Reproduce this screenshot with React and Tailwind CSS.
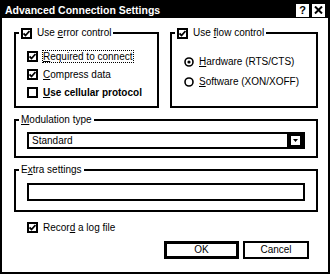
import React from "react";

const font = { fontFamily: '"Liberation Sans", Arial, sans-serif' };

function Check({ checked }) {
  return (
    <span className="flex h-[11px] w-[11px] shrink-0 items-center justify-center border-2 border-black bg-white">
      {checked && (
        <svg width="7" height="7" viewBox="0 0 7 7">
          <path d="M0.5 3.5 L2.5 5.5 L6.5 1" fill="none" stroke="black" strokeWidth="1.8" />
        </svg>
      )}
    </span>
  );
}

function Radio({ on }) {
  return (
    <svg width="10" height="10" viewBox="0 0 10 10" className="shrink-0">
      <circle cx="5" cy="5" r="4" fill="white" stroke="black" strokeWidth="1.6" />
      {on && <circle cx="5" cy="5" r="1.6" fill="black" />}
    </svg>
  );
}

function U({ children }) {
  return <span className="underline underline-offset-1">{children}</span>;
}

function Group({ legend, className, children }) {
  return (
    <fieldset className={`border-2 border-black ${className}`}>
      <legend className="ml-[3px] flex items-center gap-[5px] px-[2px] text-[10px] leading-[12px]">{legend}</legend>
      {children}
    </fieldset>
  );
}

export default function App() {
  return (
    <div className="h-[276px] w-[330px] bg-white text-black" style={font}>
      <div className="flex h-[274px] w-[330px] flex-col border-2 border-black">
        <div className="flex h-[16px] items-center justify-between bg-black pl-[3px] pr-[3px]">
          <span className="text-[10.5px] font-bold leading-none text-white">Advanced Connection Settings</span>
          <div className="flex gap-[3px]">
            <span className="flex h-[13px] w-[13px] items-center justify-center bg-white text-[11px] font-bold leading-none">?</span>
            <span className="flex h-[13px] w-[13px] items-center justify-center bg-white">
              <svg width="9" height="8" viewBox="0 0 9 8">
                <path d="M1 0.5 L8 7.5 M8 0.5 L1 7.5" stroke="black" strokeWidth="2" />
              </svg>
            </span>
          </div>
        </div>

        <div className="flex flex-col pl-[12px] pr-[10px]">
          <div className="mt-[9px] flex gap-[11px]">
            <Group
              className="h-[81px] w-[145px]"
              legend={
                <>
                  <Check checked />
                  <span>Use <U>e</U>rror control</span>
                </>
              }
            >
              <div className="flex flex-col gap-[7px] pl-[11px] pt-[12px] text-[10px] leading-[11px]">
                <div className="flex items-center gap-[5px]">
                  <Check checked />
                  <span className="outline-1 outline-dotted outline-black"><U>R</U>equired to connect</span>
                </div>
                <div className="flex items-center gap-[5px]">
                  <Check checked />
                  <span><U>C</U>ompress data</span>
                </div>
                <div className="flex items-center gap-[5px]">
                  <Check />
                  <span className="font-semibold"><U>U</U>se cellular protocol</span>
                </div>
              </div>
            </Group>
            <Group
              className="h-[81px] w-[148px]"
              legend={
                <>
                  <Check checked />
                  <span>Use <U>f</U>low control</span>
                </>
              }
            >
              <div className="flex flex-col gap-[9px] pl-[12px] pt-[17px] text-[10px] leading-[11px]">
                <div className="flex items-center gap-[5px]">
                  <Radio on />
                  <span><U>H</U>ardware (RTS/CTS)</span>
                </div>
                <div className="flex items-center gap-[5px]">
                  <Radio />
                  <span><U>S</U>oftware (XON/XOFF)</span>
                </div>
              </div>
            </Group>
          </div>

          <Group className="mt-[6px] h-[44px] w-[304px]" legend={<span><U>M</U>odulation type</span>}>
            <div className="ml-[11px] mt-[6px] flex h-[17px] w-[278px] items-center border-2 border-black">
              <span className="flex-1 pl-[3px] text-[10px] leading-none">Standard</span>
              <span className="flex h-full w-[16px] items-center justify-center bg-black">
                <span className="flex h-[9px] w-[9px] items-center justify-center bg-white">
                  <svg width="5" height="3" viewBox="0 0 5 3">
                    <path d="M0 0 H5 L2.5 3 Z" fill="black" />
                  </svg>
                </span>
              </span>
            </div>
          </Group>

          <Group className="mt-[6px] h-[48px] w-[304px]" legend={<span>E<U>x</U>tra settings</span>}>
            <div className="ml-[11px] mt-[7px] h-[18px] w-[278px] border-2 border-black" />
          </Group>

          <div className="ml-[13px] mt-[10px] flex items-center gap-[5px] text-[10px] leading-[11px]">
            <Check checked />
            <span>Recor<U>d</U> a log file</span>
          </div>

          <div className="mt-[8px] flex justify-end gap-[4px] pr-[9px]">
            <button className="h-[18px] w-[75px] border-[3px] border-black text-[10px] leading-none">OK</button>
            <button className="h-[18px] w-[66px] border-2 border-black text-[10px] leading-none">Cancel</button>
          </div>
        </div>
      </div>
    </div>
  );
}
